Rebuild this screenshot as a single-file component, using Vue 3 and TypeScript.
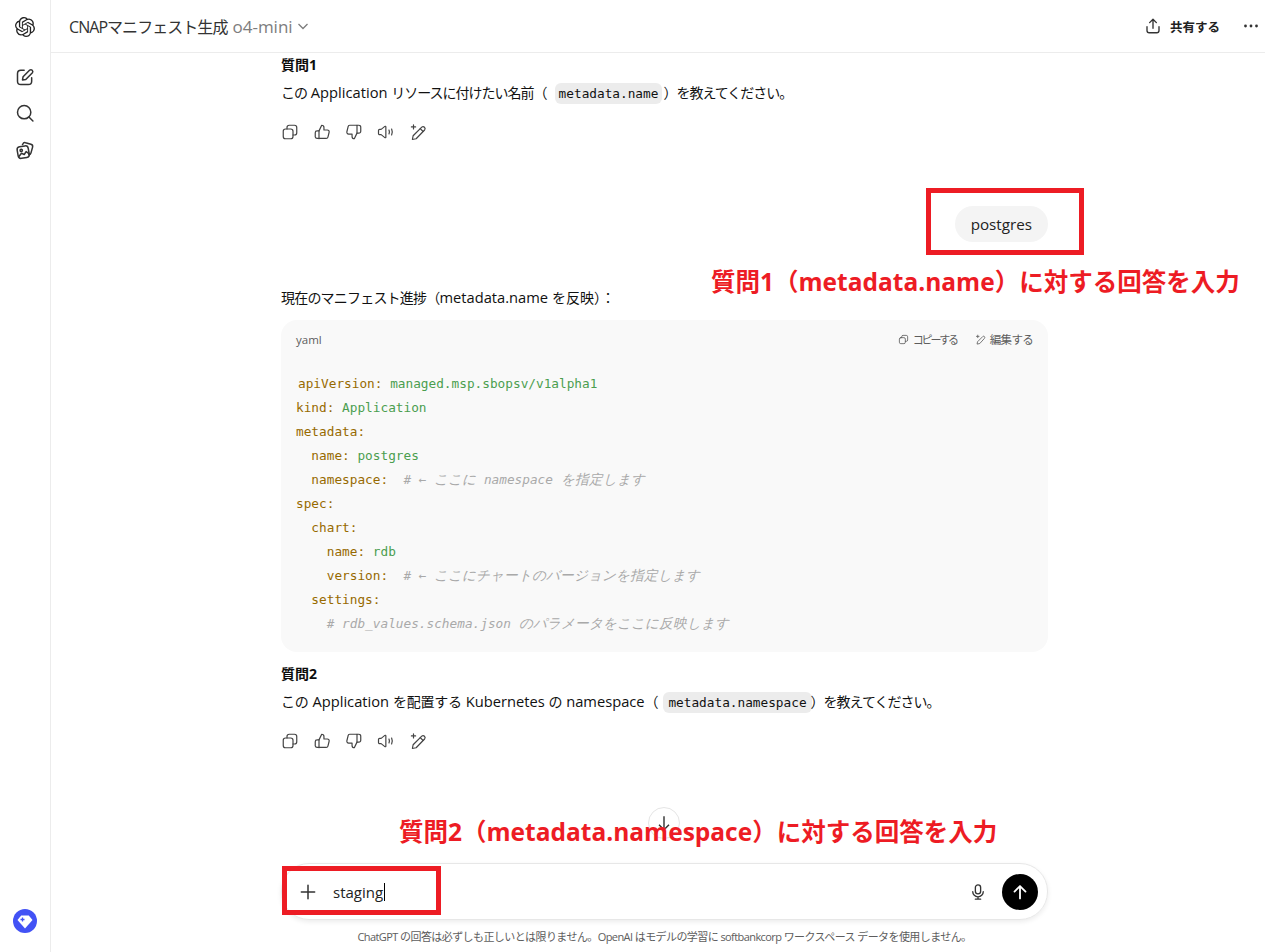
<script setup lang="ts">
const actions: string[][] = [
  ['M8 8V6a3 3 0 0 1 3-3h7a3 3 0 0 1 3 3v7a3 3 0 0 1-3 3h-2', 'M6 8h7a3 3 0 0 1 3 3v7a3 3 0 0 1-3 3H6a3 3 0 0 1-3-3v-7a3 3 0 0 1 3-3z'],
  ['M8 10.5v10.5', 'M8 10.5l3.6-7.5c1.7 0 3 1.3 3 3v3.3h4.6a2.4 2.4 0 0 1 2.3 3l-1.6 6.4a2.4 2.4 0 0 1-2.3 1.8H5.5A2.5 2.5 0 0 1 3 18.5V13a2.5 2.5 0 0 1 2.5-2.5z'],
  ['M16 13.5V3', 'M16 13.5L12.4 21c-1.7 0-3-1.3-3-3v-3.3H4.8a2.4 2.4 0 0 1-2.3-3l1.6-6.4A2.4 2.4 0 0 1 6.4 3h12.1A2.5 2.5 0 0 1 21 5.5V11a2.5 2.5 0 0 1-2.5 2.5z'],
  ['M2 10a1.5 1.5 0 0 1 1.5-1.5h2L10.500 4.500a.8.8 0 0 1 1.300.6v13.800a.8.8 0 0 1-1.300.6l-5-4h-2A1.500 1.500 0 0 1 2 14z', 'M16 9.5c.7 1.5.7 3.5 0 5', 'M19.500 8c1.100 2.500 1.100 5.500 0 8'],
  ['M9.500 21l-5 1 1-5L17 5.500a2.700 2.700 0 0 1 3.800 3.800z', 'M15 7.500l3.800 3.800', 'M6 2.500v5.500', 'M3.200 5.200h5.600'],
]
const openai = 'M22.2819 9.8211a5.9847 5.9847 0 0 0-.5157-4.9108 6.0462 6.0462 0 0 0-6.5098-2.9A6.0651 6.0651 0 0 0 4.9807 4.1818a5.9847 5.9847 0 0 0-3.9977 2.9 6.0462 6.0462 0 0 0 .7427 7.0966 5.98 5.98 0 0 0 .511 4.9107 6.051 6.051 0 0 0 6.5146 2.9001A5.9847 5.9847 0 0 0 13.2599 24a6.0557 6.0557 0 0 0 5.7718-4.2058 5.9894 5.9894 0 0 0 3.9977-2.9001 6.0557 6.0557 0 0 0-.7475-7.0729zm-9.022 12.6081a4.4755 4.4755 0 0 1-2.8764-1.0408l.1419-.0804 4.7783-2.7582a.7948.7948 0 0 0 .3927-.6813v-6.7369l2.02 1.1686a.071.071 0 0 1 .038.052v5.5826a4.504 4.504 0 0 1-4.4945 4.4944zm-9.6607-4.1254a4.4708 4.4708 0 0 1-.5346-3.0137l.142.0852 4.783 2.7582a.7712.7712 0 0 0 .7806 0l5.8428-3.3685v2.3324a.0804.0804 0 0 1-.0332.0615L9.74 19.9502a4.4992 4.4992 0 0 1-6.1408-1.6464zM2.3408 7.8956a4.485 4.485 0 0 1 2.3655-1.9728V11.6a.7664.7664 0 0 0 .3879.6765l5.8144 3.3543-2.0201 1.1685a.0757.0757 0 0 1-.071 0l-4.8303-2.7865A4.504 4.504 0 0 1 2.3408 7.872zm16.5963 3.8558L13.1038 8.364 15.1192 7.2a.0757.0757 0 0 1 .071 0l4.8303 2.7913a4.4944 4.4944 0 0 1-.6765 8.1042v-5.6772a.79.79 0 0 0-.407-.667zm2.0107-3.0231l-.142-.0852-4.7735-2.7818a.7759.7759 0 0 0-.7854 0L9.409 9.2297V6.8974a.0662.0662 0 0 1 .0284-.0615l4.8303-2.7866a4.4992 4.4992 0 0 1 6.6802 4.66zM8.3065 12.863l-2.02-1.1638a.0804.0804 0 0 1-.038-.0567V6.0742a4.4992 4.4992 0 0 1 7.3757-3.4537l-.142.0805L8.704 5.459a.7948.7948 0 0 0-.3927.6813zm1.0976-2.3654l2.602-1.4998 2.6069 1.4998v2.9994l-2.5974 1.4997-2.6067-1.4997Z'
</script>

<template>
  <div class="app">
    <aside class="rail">
      <svg class="logo" viewBox="0 0 24 24" width="20" height="20"><path :d="openai" fill="#222" /></svg>
      <svg class="ic new" viewBox="0 0 24 24" width="20" height="20"><path d="M11 4H7a4 4 0 0 0-4 4v9a4 4 0 0 0 4 4h9a4 4 0 0 0 4-4v-4" /><path d="M9 15.500l.7-3.800 8-8a2.300 2.300 0 0 1 3.200 3.200l-8 8z" /></svg>
      <svg class="ic" viewBox="0 0 24 24" width="20" height="20"><circle cx="11" cy="11" r="8" /><path d="M17 17l4.500 4.500" /></svg>
      <svg class="ic" viewBox="0 0 24 24" width="20" height="20"><path d="M9 5.500l.5-.9a2.500 2.500 0 0 1 3.100-1.300l6.500 1.800a2.800 2.800 0 0 1 2 3.400l-2 7.200a2.800 2.800 0 0 1-2.600 2" /><g transform="rotate(-10 10 14)"><rect x="3" y="7.500" width="13.500" height="14" rx="3.500" /><circle cx="7.800" cy="12" r="1.400" /><path d="M3.500 19l4-3.500 3 2 2.800-3 3 3" /></g></svg>
      <div class="gem">
        <svg viewBox="0 0 24 24" width="24" height="24"><path d="M8.200 6.500h7.600L19.500 11 12 19.500 4.500 11z" fill="#fff" /><path d="M9.500 8.500v4M7.500 10.500h4" stroke="#4252f5" stroke-width="1.300" fill="none" /></svg>
      </div>
    </aside>

    <main class="main">
      <header class="top">
        <span class="title">CNAPマニフェスト生成</span>
        <span class="model">o4-mini</span>
        <svg class="chev" viewBox="0 0 12 12" width="12" height="12"><path d="M1.500 4l4.500 4.500L10.500 4" /></svg>
        <div class="spacer"></div>
        <svg class="ic share-ic" viewBox="0 0 24 24" width="18" height="18"><path d="M12 15V3.500M7.500 7.500L12 3l4.500 4.500" /><path d="M4 13v5a3 3 0 0 0 3 3h10a3 3 0 0 0 3-3v-5" /></svg>
        <span class="share">共有する</span>
        <svg class="dots" viewBox="0 0 16 4" width="16" height="4"><circle cx="2.500" cy="2" r="1.400" /><circle cx="8" cy="2" r="1.400" /><circle cx="13.500" cy="2" r="1.400" /></svg>
      </header>

      <section class="thread">
        <h4 class="q q1">質問1</h4>
        <p class="line"><span class="ja">この</span> Application <span class="ja">リソースに付けたい名前（</span><code class="chip">metadata.name</code><span class="ja">）を教えてください。</span></p>
        <div class="acts">
          <svg v-for="(a, i) in actions" :key="i" class="ic act" viewBox="0 0 24 24" width="18" height="18"><path v-for="(d, j) in a" :key="j" :d="d" /></svg>
        </div>

        <div class="bubble-row"><div class="bubble">postgres</div></div>

        <p class="line intro"><span class="ja mid">現在のマニフェスト進捗（</span>metadata.name <span class="ja wide">を反映）：</span></p>
        <div class="code">
          <div class="code-head">
            <span>yaml</span>
            <div class="tools">
              <svg class="ic tool-ic" viewBox="0 0 24 24" width="11" height="11"><path d="M8 8V6a3 3 0 0 1 3-3h7a3 3 0 0 1 3 3v7a3 3 0 0 1-3 3h-2" /><rect x="3" y="8" width="13" height="13" rx="3" /></svg>
              <span class="copy">コピーする</span>
              <svg class="ic tool-ic tool-gap" viewBox="0 0 24 24" width="11" height="11"><path d="M9.500 21l-5 1 1-5L17 5.500a2.700 2.700 0 0 1 3.800 3.800z" /><path d="M6 2.500v5.500M3.200 5.200h5.600" /></svg>
              <span class="edit">編集する</span>
            </div>
          </div>
          <pre class="src"><span class="first"><b>apiVersion:</b> <i>managed.msp.sbopsv/v1alpha1</i></span>
<b>kind:</b> <i>Application</i>
<b>metadata:</b>
  <b>name:</b> <i>postgres</i>
  <b>namespace:</b>  <em># ← <span class="jc">ここに</span> namespace <span class="jc">を指定します</span></em>
<b>spec:</b>
  <b>chart:</b>
    <b>name:</b> <i>rdb</i>
    <b>version:</b>  <em># ← <span class="jc">ここにチャートのバージョンを指定します</span></em>
  <b>settings:</b>
    <em># rdb_values.schema.json <span class="jc">のパラメータをここに反映します</span></em></pre>
        </div>

        <h4 class="q q2">質問2</h4>
        <p class="line"><span class="ja loose">この</span> Application <span class="ja loose">を配置する</span> Kubernetes <span class="ja loose">の</span> namespace<span class="ja loose">（</span><code class="chip chip2">metadata.namespace</code><span class="ja">）を教えてください。</span></p>
        <div class="acts acts2">
          <svg v-for="(a, i) in actions" :key="i" class="ic act" viewBox="0 0 24 24" width="18" height="18"><path v-for="(d, j) in a" :key="j" :d="d" /></svg>
        </div>
      </section>

      <section class="foot">
        <div class="composer">
          <svg class="ic plus" viewBox="0 0 24 24" width="20" height="20"><path d="M12 4v16M4 12h16" /></svg>
          <span class="typed">staging</span><span class="caret"></span>
          <div class="spacer"></div>
          <svg class="ic mic" viewBox="0 0 24 24" width="18" height="18"><rect x="8.500" y="2.500" width="7" height="12" rx="3.500" /><path d="M5 11.500a7 7 0 0 0 14 0M12 18.500v3M8.500 21.500h7" /></svg>
          <div class="send"><svg viewBox="0 0 24 24" width="22" height="22"><path d="M12 19V5.500M6 11.500l6-6 6 6" fill="none" stroke="#fff" stroke-width="2" stroke-linecap="round" stroke-linejoin="round" /></svg></div>
        </div>
        <p class="note">ChatGPT の回答は必ずしも正しいとは限りません。OpenAI はモデルの学習に softbankcorp ワークスペース データを使用しません。</p>
      </section>
    </main>

    <div class="down"><svg viewBox="0 0 24 24" width="20" height="20"><path d="M12 4v16M6 14l6 6 6-6" fill="none" stroke="#333" stroke-width="1.700" /></svg></div>
    <div class="mark box-a"></div>
    <div class="mark box-b"></div>
    <div class="label label-a">質問1（metadata.name）に対する回答を入力</div>
    <div class="label label-b">質問2（metadata.namespace）に対する回答を入力</div>
  </div>
</template>

<style scoped>
.app { position: relative; display: flex; width: 1265px; height: 952px; overflow: hidden; background: #fff; color: #0d0d0d; font-family: "Open Sans", "Noto Sans CJK JP", sans-serif; font-size: 14px; }
.rail { width: 50px; flex: none; border-right: 1px solid #ececec; display: flex; flex-direction: column; align-items: center; padding-top: 17px; box-sizing: content-box; }
.ic { fill: none; stroke: #333; stroke-width: 1.800; stroke-linecap: round; stroke-linejoin: round; display: block; flex: none; }
.logo { display: block; margin-bottom: 30px; }
.rail .ic { margin-bottom: 17px; }
.rail .new { margin-bottom: 16px; }
.gem { width: 24px; height: 24px; border-radius: 50%; background: #4252f5; margin-top: auto; margin-bottom: 19px; }
.gem svg { display: block; }
.main { flex: 1; min-width: 0; display: flex; flex-direction: column; }
.top { height: 52px; flex: none; border-bottom: 1px solid #ececec; display: flex; align-items: center; padding: 0 6px 0 18px; }
.title { font-size: 16px; letter-spacing: -0.950px; color: #333; }
.model { font-size: 17px; color: #7d7d7d; margin-left: 5px; }
.chev { fill: none; stroke: #7d7d7d; stroke-width: 1.300; margin-left: 4px; }
.spacer { flex: 1; }
.share { font-size: 12.500px; font-weight: 600; margin-left: 8px; color: #222; }
.dots { fill: #333; margin-left: 23px; }
.thread { flex: 1; width: 767px; margin-left: 230px; min-height: 0; }
.q { margin: 2px 0 0; font-size: 14px; line-height: 20px; font-weight: 700; }
.line { margin: 5px 0 0; font-size: 14.700px; line-height: 24px; white-space: nowrap; color: #111; }
.ja { font-size: 14px; line-height: 1; letter-spacing: -1px; }
.ja.mid { letter-spacing: -0.800px; }
.ja.wide { letter-spacing: 0; }
.ja.loose { letter-spacing: -0.200px; }
.chip { font-family: "DejaVu Sans Mono", monospace; font-size: 12.750px; line-height: 1; background: #ececec; border-radius: 6px; padding: 3px 4px; margin: 0 1px 0 8px; }
.chip2 { padding: 3px 5px; margin: 0 -1px 0 5px; }
.acts { display: flex; gap: 14px; margin-top: 19px; height: 18px; }
.act { stroke: #444; stroke-width: 1.600; }
.bubble-row { display: flex; justify-content: flex-end; margin-top: 65px; }
.bubble { background: #f4f4f4; border-radius: 18px; height: 36px; line-height: 36px; padding: 0 16px; font-size: 15.200px; color: #222; }
.intro { margin-top: 43px; }
.code { margin-top: 11px; background: #f9f9f9; border-radius: 16px; height: 332px; padding: 0 15px; box-sizing: border-box; }
.code-head { display: flex; justify-content: space-between; align-items: center; height: 38px; font-size: 11.500px; color: #5d5d5d; }
.tools { display: flex; align-items: center; gap: 4px; }
.tool-ic { stroke: #5d5d5d; }
.tool-gap { margin-left: 14px; }
.copy { font-size: 11px; letter-spacing: -2.200px; }
.edit { letter-spacing: -0.700px; }
.src { margin: 14px 0 0; font-family: "DejaVu Sans Mono", monospace; font-size: 12.750px; line-height: 24px; color: #333; }
.src .first { padding-left: 2px; }
.src b { font-weight: 400; color: #976a00; }
.src i { font-style: normal; color: #4b9e4f; }
.src em { font-style: italic; color: #a9a9a9; }
.jc { font-size: 13.700px; line-height: 1; }
.q2 { margin-top: 12px; }
.acts2 { margin-top: 19px; }
.foot { flex: none; width: 767px; margin-left: 230px; }
.composer { height: 57px; border: 1px solid #e7e7e7; border-radius: 28px; box-shadow: 0 2px 5px rgba(0, 0, 0, 0.08); display: flex; align-items: center; padding: 0 9px 0 16px; box-sizing: border-box; }
.typed { margin-left: 15px; font-size: 15px; color: #222; }
.caret { width: 1px; height: 18px; background: #000; margin-left: 1px; }
.mic { margin-right: 15px; }
.send { width: 36px; height: 36px; border-radius: 50%; background: #000; display: flex; align-items: center; justify-content: center; }
.note { margin: 9px 0 7px; text-align: center; font-size: 11px; letter-spacing: -0.580px; line-height: 16px; color: #5d5d5d; white-space: nowrap; }
.down { position: absolute; left: 648px; top: 807px; width: 32px; height: 32px; border-radius: 50%; border: 1px solid #e5e5e5; background: #fff; display: flex; align-items: center; justify-content: center; box-sizing: border-box; }
.mark { position: absolute; border: 5px solid #ed1c24; box-sizing: border-box; }
.box-a { left: 926px; top: 188px; width: 158px; height: 67px; }
.box-b { left: 282px; top: 866px; width: 159px; height: 49px; }
.label { position: absolute; color: #ed1c24; font-weight: 700; font-size: 24.500px; line-height: 30px; white-space: nowrap; }
.label-a { left: 711px; top: 267px; }
.label-b { left: 399px; top: 817px; }
</style>
